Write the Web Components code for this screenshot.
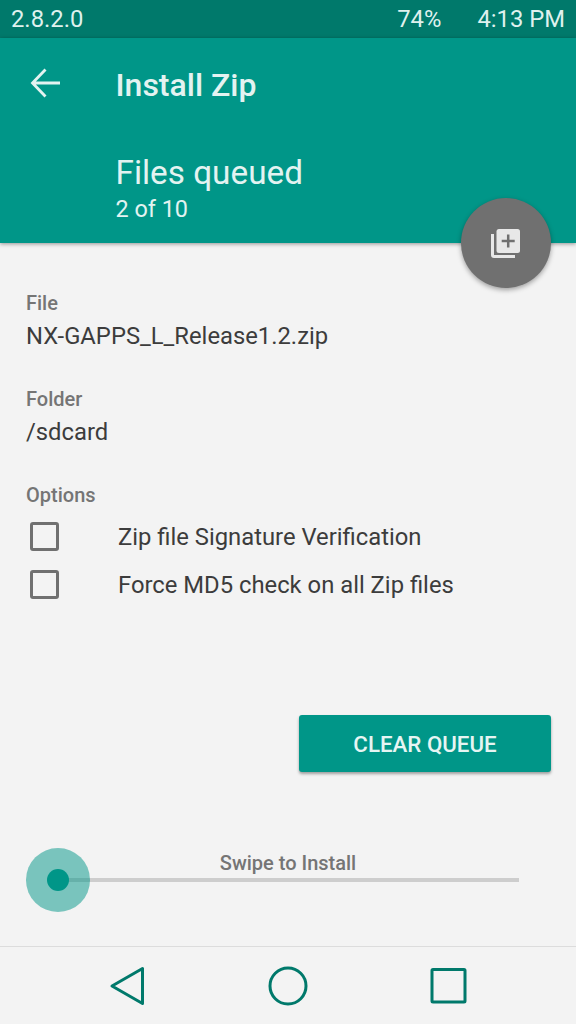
<!doctype html>
<html lang="en">
<head>
<meta charset="UTF-8">
<title>Install Zip</title>
<style>
    html, body { margin: 0; padding: 0; background: #f3f3f3; }
    body { width: 576px; height: 1024px; overflow: hidden; font-family: Roboto, sans-serif; }
</style>
</head>
<body>
<script>
    function createElement(name, html) {
        customElements.define(name, class extends HTMLElement {
            constructor() {
                super();
                this.attachShadow({mode: 'open'});
                this.shadowRoot.innerHTML = html(this);
            }
        });
    }

    createElement('status-bar', () => `
        <style>
            :host { display: flex; height: 38px; box-sizing: border-box; padding: 0 11px; align-items: center;
                    background: #00796b; color: #dff1ee; font-size: 23.8px; line-height: 38px; }
            .version { flex: 1; }
            .battery { margin-right: 36px; }
        </style>
        <span class="version">2.8.2.0</span><span class="battery">74%</span><span>4:13 PM</span>`);

    createElement('app-header', () => `
        <style>
            :host { display: block; position: relative; height: 205px; background: #009688; color: #e3f3f1;
                    box-shadow: 0 1px 4px rgba(0,0,0,.4); z-index: 1; }
            .bar { display: flex; align-items: center; height: 94px; }
            .back { width: 115.500px; display: flex; justify-content: center; padding-right: 26px; box-sizing: border-box; margin-top: -4px; }
            h1 { margin: 0; font-size: 32px; font-weight: 500; }
            .sub { padding-left: 115.500px; padding-top: 22px; }
            .big { font-size: 33.300px; line-height: 38px; }
            .small { font-size: 23.400px; line-height: 32px; margin-top: 1px; }
            .fab { position: absolute; left: 461px; top: 160px; width: 90px; height: 90px; border-radius: 50%;
                   background: #707070; box-shadow: 0 2px 5px rgba(0,0,0,.35); display: flex; align-items: center; justify-content: center; }
        </style>
        <div class="bar">
            <div class="back"><svg width="30" height="30" viewBox="0 0 30 30"><path d="M30 15H2.500M15.500 1.500L2.500 15l13 13.500" fill="none" stroke="#e3f3f1" stroke-width="2.800"/></svg></div>
            <h1>Install Zip</h1>
        </div>
        <div class="sub"><div class="big">Files queued</div><div class="small">2 of 10</div></div>
        <div class="fab"><svg width="30" height="30" viewBox="0 0 30 30"><path d="M0 6H3V27H24V30H3Q0 30 0 27z" fill="#e8e8e8"/><rect x="5.500" y="1" width="23.500" height="24" rx="2.500" fill="#e8e8e8"/><path d="M17.200 6.500v13M10.700 13h13" stroke="#707070" stroke-width="2.500"/></svg></div>`);

    createElement('info-field', el => `
        <style>
            :host { display: block; margin-bottom: 33px; }
            .label { font-size: 20px; line-height: 26px; font-weight: 500; color: #757575; }
            .value { font-size: 23.800px; line-height: 34px; color: #3c3c3c; margin-top: 3px; }
        </style>
        <div class="label">${el.getAttribute('label')}</div>
        <div class="value"><slot></slot></div>`);

    createElement('check-row', () => `
        <style>
            :host { display: flex; align-items: center; height: 48px; font-size: 23.800px; color: #3c3c3c; }
            .box { width: 23px; height: 23px; border: 3px solid #707070; border-radius: 3px; margin: 0 59px 2px 4px; flex: none; }
        </style>
        <span class="box"></span><slot></slot>`);

    createElement('flat-button', () => `
        <style>
            :host { display: flex; align-items: center; justify-content: center; width: 252px; height: 57px;
                    background: #009688; color: #e6f5f3; border-radius: 3px; font-size: 22.300px; font-weight: 500;
                    box-shadow: 0 2px 3px rgba(0,0,0,.35); }
        </style><slot></slot>`);

    createElement('swipe-slider', () => `
        <style>
            :host { display: block; position: relative; height: 64px; }
            .track { position: absolute; left: 32px; right: 32px; top: 30px; height: 4px; background: #cdcdcd; }
            .label { position: absolute; left: 0; right: 0; top: 2px; text-align: center; font-size: 20px; font-weight: 500; color: #757575; line-height: 26px; }
            .thumb { position: absolute; left: 0.500px; top: 0; width: 64.500px; height: 64px; border-radius: 50%; background: rgba(0,150,136,.5); display: flex; align-items: center; justify-content: center; }
            .dot { width: 22px; height: 22px; border-radius: 50%; background: #009688; }
        </style>
        <div class="track"></div><div class="label">Swipe to Install</div>
        <div class="thumb"><div class="dot"></div></div>`);

    createElement('nav-bar', () => `
        <style>
            :host { display: flex; height: 77px; border-top: 1px solid #dcdcdc; justify-content: center; align-items: center; }
            div { width: 160px; display: flex; justify-content: center; }
            svg { display: block; }
        </style>
        <div><svg width="38" height="40" viewBox="0 0 38 40"><path d="M33.500 2.500V37.500L3 20z" fill="none" stroke="#00796b" stroke-width="3" stroke-linejoin="round"/></svg></div>
        <div><svg width="40" height="40" viewBox="0 0 40 40"><circle cx="20" cy="20" r="18" fill="none" stroke="#00796b" stroke-width="3"/></svg></div>
        <div><svg width="38" height="38" viewBox="0 0 38 38"><rect x="3" y="2.500" width="33" height="32.500" rx="1" fill="none" stroke="#00796b" stroke-width="3"/></svg></div>`);

    createElement('install-screen', () => `
        <style>
            :host { display: flex; flex-direction: column; width: 576px; height: 1024px; background: #f3f3f3; }
            main { flex: 1; display: flex; flex-direction: column; padding: 47px 25px 0 26px; box-sizing: border-box; }
            .options { font-size: 20px; line-height: 26px; font-weight: 500; color: #757575; margin-bottom: 5px; }
            .actions { display: flex; justify-content: flex-end; margin-top: 106px; }
            swipe-slider { margin-top: 76px; margin-left: -1px; }
        </style>
        <status-bar></status-bar>
        <app-header></app-header>
        <main>
            <info-field label="File">NX-GAPPS_L_Release1.2.zip</info-field>
            <info-field label="Folder">/sdcard</info-field>
            <div class="options">Options</div>
            <check-row>Zip file Signature Verification</check-row>
            <check-row>Force MD5 check on all Zip files</check-row>
            <div class="actions"><flat-button>CLEAR QUEUE</flat-button></div>
            <swipe-slider></swipe-slider>
        </main>
        <nav-bar></nav-bar>`);
</script>
<install-screen></install-screen>
</body>
</html>
